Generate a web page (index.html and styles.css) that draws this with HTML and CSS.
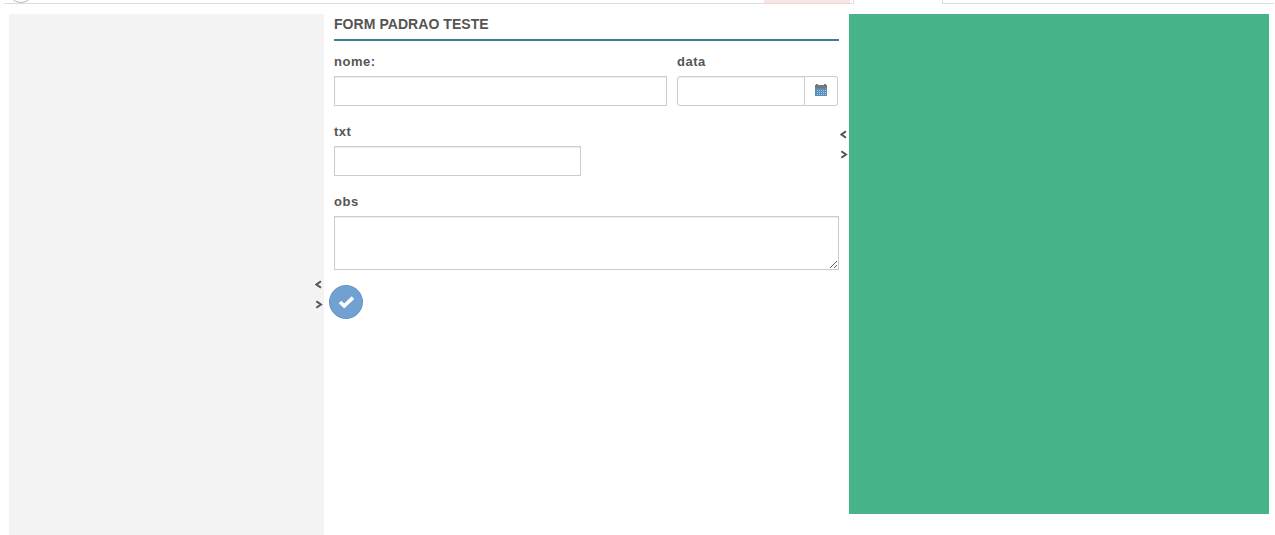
FILE: index.html
```
<!DOCTYPE html>
<html lang="pt-BR">
<head>
<meta charset="utf-8">
<title>Form padrao teste</title>
<link rel="stylesheet" href="styles.css">
</head>
<body>
<header class="tabs">
  <div class="tabs-left"><span class="round"></span></div>
  <div class="tab-alert"></div>
  <div class="tab-gap"></div>
  <div class="tab-active"></div>
  <div class="tabs-right"></div>
</header>
<main class="columns">
  <aside class="side">
    <div class="resizer resizer-side">
      <svg width="8" height="20" viewBox="0 0 8 20"><path class="arrow" d="M6 7.2L1.5 10.5L6 13.8"/></svg>
      <svg width="8" height="20" viewBox="0 0 8 20"><path class="arrow" d="M1.3 7.2L6 10.5L1.3 13.8"/></svg>
    </div>
  </aside>
  <section class="form">
    <h1 class="title">FORM PADRAO TESTE</h1>
    <div class="row">
      <div class="field nome">
        <label class="label" for="nome">nome:</label>
        <input class="control" id="nome" type="text">
      </div>
      <div class="field data">
        <label class="label" for="data">data</label>
        <div class="group">
          <input class="control date" id="data" type="text">
          <span class="addon">
            <svg width="12" height="12" viewBox="0 0 12 12" shape-rendering="crispEdges">
              <path fill="#777" d="M1 0h2v1h6V0h2v1h1v3H0V1h1z"/>
              <path fill="#5b8db8" d="M0 4h12v8H0z"/>
              <path fill="#a4cdea" d="M2 6h1v1H2zM4 6h1v1H4zM6 6h1v1H6zM8 6h1v1H8zM10 6h1v1h-1zM2 8h1v1H2zM4 8h1v1H4zM6 8h1v1H6zM8 8h1v1H8zM10 8h1v1h-1zM2 10h1v1H2zM4 10h1v1H4zM6 10h1v1H6zM8 10h1v1H8zM10 10h1v1h-1z"/>
            </svg>
          </span>
        </div>
      </div>
    </div>
    <div class="field txt">
      <label class="label" for="txt">txt</label>
      <input class="control" id="txt" type="text">
    </div>
    <div class="field">
      <label class="label" for="obs">obs</label>
      <textarea class="control area" id="obs"></textarea>
    </div>
    <button class="confirm" type="button" aria-label="Confirmar">
      <svg width="16" height="14" viewBox="0 0 16 14"><path d="M2 7l4.2 4L15 2.6" fill="none" stroke="#fff" stroke-width="3.7"/></svg>
    </button>
    <div class="resizer resizer-form">
      <svg width="8" height="20" viewBox="0 0 8 20"><path class="arrow" d="M6 7.2L1.5 10.5L6 13.8"/></svg>
      <svg width="8" height="20" viewBox="0 0 8 20"><path class="arrow" d="M1.3 7.2L6 10.5L1.3 13.8"/></svg>
    </div>
  </section>
  <aside class="preview"></aside>
</main>
</body>
</html>
```
FILE: styles.css
```
* { box-sizing: border-box; }
body {
  margin: 0;
  height: 535px;
  overflow: hidden;
  background: #fff;
  color: #555;
  font: 13px/20px "Liberation Sans", Arial, sans-serif;
}
.tabs { display: flex; height: 4px; padding: 0 1px 0 4px; }
.tabs > div { border-bottom: 1px solid #ddd; }
.tabs-left { position: relative; width: 760px; overflow: hidden; }
.round {
  position: absolute;
  left: 3px;
  bottom: 0;
  width: 28px;
  height: 28px;
  border: 1px solid #bbb;
  border-radius: 50%;
}
.tab-alert { width: 86px; background: #fde4e4; }
.tab-gap { width: 3px; }
.tabs > .tab-active {
  width: 90px;
  border: solid #ddd;
  border-width: 0 1px;
}
.tabs-right { flex: 1; }
.columns { display: flex; height: 531px; padding: 10px 6px 0 9px; }
.side { position: relative; width: 315px; background: #f3f3f3; }
.form { position: relative; width: 525px; padding: 0 10px; }
.preview { width: 420px; height: 500px; background: #47b389; }
.title {
  height: 27px;
  margin: 0 0 10px;
  border-bottom: 2px solid #3b8190;
  font-size: 14px;
  font-weight: bold;
  letter-spacing: 0.06px;
  line-height: 20px;
}
.row { display: flex; gap: 10px; }
.nome { width: 333px; }
.data { width: 161px; }
.txt { width: 247px; }
.field { margin-bottom: 15px; }
.label { display: block; height: 25px; font-weight: bold; letter-spacing: 0.5px; line-height: 22px; }
.control {
  display: block;
  width: 100%;
  height: 30px;
  margin: 0;
  padding: 5px 10px;
  border: 1px solid #ccc;
  border-radius: 0;
  background: #fff;
  box-shadow: inset 0 1px 1px rgba(0, 0, 0, .075);
  color: #555;
  font: inherit;
  outline: none;
}
.group { display: flex; }
.date { width: 128px; border-radius: 3px 0 0 3px; }
.addon {
  display: flex;
  align-items: center;
  justify-content: center;
  width: 33px;
  height: 30px;
  border: 1px solid #ccc;
  border-left: 0;
  border-radius: 0 3px 3px 0;
  padding-bottom: 2px;
}
.area { height: 54px; resize: vertical; }
.confirm {
  display: flex;
  align-items: center;
  justify-content: center;
  width: 34px;
  height: 34px;
  margin-left: -5px;
  padding: 0;
  border: 1px solid #6196c8;
  border-radius: 50%;
  background: #70a1d0;
}
.resizer {
  position: absolute;
  right: 1px;
  display: flex;
  flex-direction: column;
  width: 8px;
}
.resizer-side { top: 260px; }
.resizer-form { top: 110px; }
.arrow { fill: none; stroke: #555; stroke-width: 2; }
```
